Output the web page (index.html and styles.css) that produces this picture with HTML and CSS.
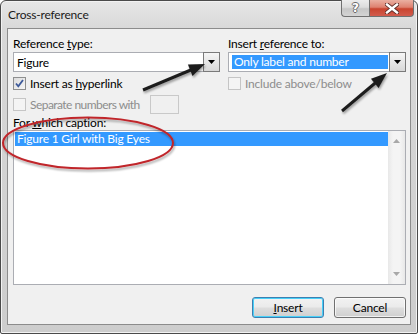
FILE: index.html
```html
<!DOCTYPE html>
<html>
<head>
<meta charset="utf-8">
<link rel="stylesheet" href="styles.css">
</head>
<body>
<div class="stage">
  <div class="window">
    <div class="titlebar">
      <span class="title">Cross-reference</span>
      <div class="caption-buttons">
        <div class="cb help">?</div>
        <div class="cb close">
          <svg width="14" height="11" viewBox="0 0 14 11">
            <path d="M2 1.5 L12 9.5 M12 1.5 L2 9.5" stroke="#5a2a26" stroke-width="4.2" stroke-linecap="square"/>
            <path d="M2 1.5 L12 9.5 M12 1.5 L2 9.5" stroke="#ffffff" stroke-width="2.4" stroke-linecap="square"/>
          </svg>
        </div>
      </div>
    </div>
    <div class="client">
      <div class="top-grid">
        <div class="col">
          <div class="label">Reference <u>t</u>ype:</div>
          <div class="combo">
            <span class="value">Figure</span>
            <span class="drop"><svg width="7" height="4" viewBox="0 0 7 4"><path d="M0 0 H7 L3.5 4 Z" fill="#000"/></svg></span>
          </div>
          <div class="check row1">
            <span class="box checked"><svg width="11" height="11" viewBox="0 0 11 11"><path d="M2 5.5 L4.3 8.3 L9 2" fill="none" stroke="#3d5a9a" stroke-width="1.8"/></svg></span>
            <span>Insert as <u>h</u>yperlink</span>
          </div>
          <div class="check row2 disabled">
            <span class="box"></span>
            <span class="sep-text">Separate numbers with</span>
            <span class="textbox"></span>
          </div>
        </div>
        <div class="col">
          <div class="label">Insert <u>r</u>eference to:</div>
          <div class="combo">
            <span class="value"><span class="sel">Only label and number</span></span>
            <span class="drop"><svg width="7" height="4" viewBox="0 0 7 4"><path d="M0 0 H7 L3.5 4 Z" fill="#000"/></svg></span>
          </div>
          <div class="check row1 disabled">
            <span class="box"></span>
            <span>Include above/below</span>
          </div>
        </div>
      </div>
      <div class="label caption-label">For <u>w</u>hich caption:</div>
      <div class="listbox">
        <div class="items">
          <div class="item selected">Figure 1 Girl with Big Eyes</div>
        </div>
        <div class="scrollbar">
          <svg width="7" height="4" viewBox="0 0 7 4"><path d="M0 4 H7 L3.5 0 Z" fill="#a8a8a8"/></svg>
          <svg width="7" height="4" viewBox="0 0 7 4"><path d="M0 0 H7 L3.5 4 Z" fill="#a8a8a8"/></svg>
        </div>
      </div>
      <div class="buttons">
        <div class="btn default"><u>I</u>nsert</div>
        <div class="btn">Cancel</div>
      </div>
    </div>
  </div>
  <svg class="annot" width="420" height="334" viewBox="0 0 420 334">
    <defs>
      <filter id="sh" x="-10%" y="-10%" width="120%" height="130%">
        <feGaussianBlur in="SourceAlpha" stdDeviation="1.2"/>
        <feOffset dx="1" dy="2" result="b"/>
        <feComponentTransfer><feFuncA type="linear" slope="0.35"/></feComponentTransfer>
        <feMerge><feMergeNode/><feMergeNode in="SourceGraphic"/></feMerge>
      </filter>
    </defs>
    <g filter="url(#sh)">
      <ellipse cx="88" cy="143" rx="85" ry="25.5" fill="none" stroke="#c0262c" stroke-width="2"/>
      <line x1="143" y1="90" x2="192" y2="69.5" stroke="#1f1f1f" stroke-width="3"/>
      <polygon points="205,64 192.5,76 187.9,64.6" fill="#1f1f1f"/>
      <line x1="342" y1="111" x2="377" y2="81.5" stroke="#1f1f1f" stroke-width="3"/>
      <polygon points="387,73 378.6,87.9 370.9,78.7" fill="#1f1f1f"/>
    </g>
  </svg>
</div>
</body>
</html>
```
FILE: styles.css
```css
html, body {
  margin: 0;
  padding: 0;
  background: #ffffff;
}
body {
  font-family: Lato, "Noto Sans", sans-serif;
  font-size: 12px;
  letter-spacing: -0.2px;
  color: #000;
}
.stage {
  position: relative;
  width: 420px;
  height: 334px;
  overflow: hidden;
}
.window {
  width: 418px;
  height: 334px;
  box-sizing: border-box;
  border: 1px solid #4a4a4a;
  border-radius: 6px 6px 2px 2px;
  background: linear-gradient(to bottom, #e6e6e6 0px, #d8d8d8 28px, #cdcdcd 100%);
  padding: 0 6px 8px 6px;
  display: flex;
  flex-direction: column;
  box-shadow: inset 0 0 0 1px #f2f2f2;
}
.titlebar {
  height: 27px;
  display: flex;
  align-items: flex-start;
  justify-content: space-between;
  flex: none;
}
.title {
  margin-top: 6px;
  margin-left: 1px;
  font-size: 12px;
  line-height: 16px;
  color: #1a1a1a;
}
.caption-buttons {
  display: flex;
  margin-top: -1px;
  margin-right: -3px;
}
.cb {
  height: 17px;
  box-sizing: border-box;
  border: 1px solid #707070;
  border-top: none;
  display: flex;
  align-items: center;
  justify-content: center;
}
.help {
  width: 28px;
  border-radius: 0 0 0 4px;
  border-right: none;
  background: linear-gradient(to bottom, #ececec 0%, #dcdcdc 45%, #c6c6c6 55%, #d4d4d4 100%);
  color: #fff;
  font-family: "DejaVu Sans", sans-serif;
  font-weight: bold;
  font-size: 12px;
  letter-spacing: 0;
  text-shadow: -1px 0 #6a6a6a, 1px 0 #6a6a6a, 0 -1px #6a6a6a, 0 1px #6a6a6a;
}
.close {
  width: 45px;
  border-radius: 0 0 4px 0;
  background: linear-gradient(to bottom, #eab0a2 0%, #de8170 45%, #c9442f 55%, #d25c4e 100%);
}
.client {
  flex: 1;
  background: #f0f0f0;
  border: 1px solid #8c8c8c;
  padding: 7px 4px 0 5px;
  display: flex;
  flex-direction: column;
  min-height: 0;
}
.top-grid {
  display: grid;
  grid-template-columns: 207px 178px;
  column-gap: 8px;
}
.col {
  display: flex;
  flex-direction: column;
}
.label {
  line-height: 15px;
  height: 15px;
  white-space: nowrap;
}
.combo {
  margin-top: 1px;
  height: 20px;
  box-sizing: border-box;
  border: 1px solid #abadb3;
  background: #fff;
  display: flex;
  align-items: stretch;
}
.value {
  flex: 1;
  display: flex;
  align-items: center;
  padding-left: 3px;
  white-space: nowrap;
  overflow: hidden;
}
.sel {
  background: #3399ff;
  color: #fff;
  height: 14px;
  line-height: 14px;
  flex: 1;
  padding-left: 2px;
  margin-right: 1px;
}
.drop {
  width: 17px;
  box-sizing: border-box;
  border: 1px solid #7a7a7a;
  margin: -1px -1px -1px 0;
  background: linear-gradient(to bottom, #f6f6f6 0%, #e6e6e6 50%, #d8d8d8 100%);
  display: flex;
  align-items: center;
  justify-content: center;
}
.check {
  display: flex;
  align-items: center;
  white-space: nowrap;
}
.check.row1 {
  margin-top: 4px;
  height: 15px;
}
.check.row2 {
  margin-top: 3px;
  height: 20px;
  width: 166px;
}
.sep-text {
  letter-spacing: -0.55px;
}
.box {
  width: 13px;
  height: 13px;
  box-sizing: border-box;
  border: 1px solid #8e8f8f;
  background: linear-gradient(135deg, #dcdcdc 0%, #f6f6f6 100%);
  margin-right: 4px;
  display: flex;
  align-items: center;
  justify-content: center;
  flex: none;
}
.disabled {
  color: #8d8d8d;
}
.disabled .box {
  border-color: #c5c5c5;
  background: #f4f4f4;
}
.textbox {
  width: 29px;
  height: 19px;
  box-sizing: border-box;
  border: 1px solid #c9c9c9;
  background: #f0f0f0;
  margin-left: auto;
  flex: none;
}
.caption-label {
  margin-top: 1px;
}
.listbox {
  height: 155px;
  box-sizing: border-box;
  border: 1px solid #abadb3;
  background: #fff;
  display: flex;
}
.items {
  flex: 1;
  padding: 1px 0 0 1px;
}
.item {
  height: 14px;
  line-height: 14px;
  padding-left: 2px;
  white-space: nowrap;
}
.item.selected {
  background: #3399ff;
  color: #fff;
}
.scrollbar {
  width: 17px;
  background: linear-gradient(to right, #e8e8e8 0%, #f4f4f4 30%, #f4f4f4 70%, #e8e8e8 100%);
  display: flex;
  flex-direction: column;
  justify-content: space-between;
  align-items: center;
  padding: 8px 0 8px 0;
  box-sizing: border-box;
}
.buttons {
  margin-top: 12px;
  display: flex;
  justify-content: flex-end;
  gap: 10px;
}
.btn {
  width: 72px;
  height: 21px;
  box-sizing: border-box;
  border: 1px solid #707070;
  border-radius: 3px;
  background: linear-gradient(to bottom, #f2f2f2 0%, #ebebeb 45%, #dddddd 55%, #cfcfcf 100%);
  display: flex;
  align-items: center;
  justify-content: center;
  box-shadow: inset 0 0 0 1px rgba(255,255,255,0.7);
}
.btn.default {
  border-color: #3c7fb1;
  box-shadow: inset 0 0 0 1px #48d0f8;
}
.annot {
  position: absolute;
  left: 0;
  top: 0;
  pointer-events: none;
}
```
